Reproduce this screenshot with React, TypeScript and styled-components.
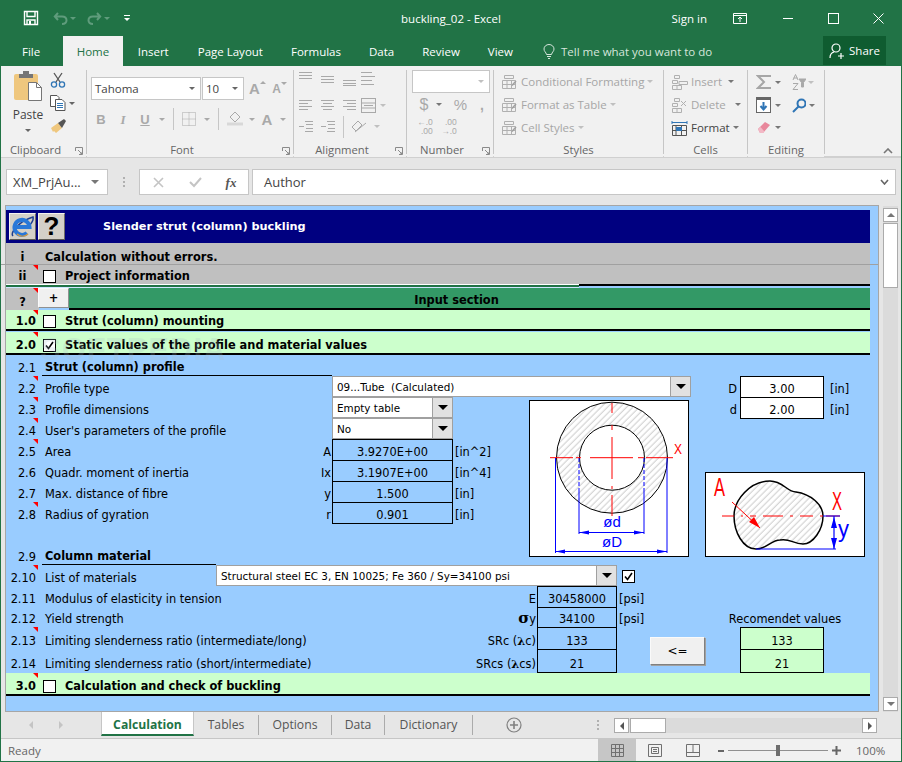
import * as React from "react";
import styled, { createGlobalStyle } from "styled-components";

const GlobalStyle = createGlobalStyle`
  html, body { margin: 0; padding: 0; background: #e6e6e6; }
  * { box-sizing: border-box; }
`;

const UI = `"Open Sans", "Noto Sans", sans-serif`;
const CELL = `"DejaVu Sans", sans-serif`;

const App_ = styled.div`
  width: 902px;
  height: 762px;
  display: flex;
  flex-direction: column;
  border: 1px solid #217346;
  border-top: 0;
  font-family: ${UI};
  font-size: 11.5px;
  color: #444;
  overflow: hidden;
`;

/* ---------- title bar ---------- */
const TitleBar = styled.div`
  height: 36px;
  background: #217346;
  color: #fff;
  display: grid;
  grid-template-columns: 1fr auto 1fr;
  align-items: center;
`;
const Qat = styled.div`
  display: flex;
  align-items: center;
  padding-left: 21px;
`;
const Slot = styled.span<{ $w: number; $h?: number }>`
  width: ${(p) => p.$w}px;
  ${(p) => (p.$h ? `height: ${p.$h}px;` : "")}
  flex: none;
  display: flex;
  align-items: center;
  justify-content: center;
`;
const WinControls = styled.div`
  display: flex;
  align-items: center;
  justify-content: flex-end;
  padding-right: 17px;
`;
const SignIn = styled.span`
  margin-right: 25px;
`;
const Caret = styled.i<{ $c?: string; $s?: number }>`
  display: block;
  flex: none;
  width: 0;
  height: 0;
  border-left: ${(p) => p.$s ?? 3}px solid transparent;
  border-right: ${(p) => p.$s ?? 3}px solid transparent;
  border-top: ${(p) => p.$s ?? 3}px solid ${(p) => p.$c ?? "#8a8a8a"};
`;

/* ---------- ribbon tabs ---------- */
const TabRow = styled.div`
  height: 30px;
  background: #217346;
  display: flex;
  align-items: stretch;
  padding-left: 7px;
  color: #fff;
`;
const RibbonTab = styled.div<{ $active?: boolean; $px?: number }>`
  display: flex;
  align-items: center;
  padding: 0 ${(p) => p.$px ?? 14}px;
  background: ${(p) => (p.$active ? "#f1f1f1" : "transparent")};
  color: ${(p) => (p.$active ? "#217346" : "#fff")};
`;
const TellMe = styled.div`
  display: flex;
  align-items: center;
  gap: 6px;
  margin-left: 16px;
  color: #d6e6dc;
  flex: 1;
`;
const Share = styled.div`
  width: 63px;
  margin-right: 15px;
  background: #0f5c30;
  display: flex;
  align-items: center;
  justify-content: center;
  gap: 4px;
  margin-bottom: 1px;
`;

/* ---------- ribbon ---------- */
const Ribbon = styled.div`
  height: 92px;
  background: #f1f1f1;
  border-bottom: 2px solid #d0d0d0;
  display: flex;
  position: relative;
`;
const Group = styled.div<{ $w: number }>`
  width: ${(p) => p.$w}px;
  flex: none;
  margin: 4px 0 2px;
  border-right: 1px solid #c6c6c6;
  display: flex;
  flex-direction: column;
`;
const GroupBody = styled.div`
  flex: 1;
  display: flex;
  min-height: 0;
`;
const GroupLabel = styled.div<{ $launch?: boolean }>`
  height: 14px;
  margin-bottom: -3px;
  line-height: 14px;
  font-size: 11.3px;
  text-align: center;
  color: #666;
  position: relative;
  padding-right: ${(p) => (p.$launch ? 16 : 0)}px;
  background: #f1f1f1;
`;
const Launcher = styled.svg`
  position: absolute;
  right: 3px;
  top: 4px;
`;
const PasteCol = styled.div`
  width: 44px;
  padding-left: 10px;
  display: flex;
  flex-direction: column;
  align-items: center;
  color: #444;
`;
const PasteLabel = styled.div`
  margin-top: 6px;
  line-height: 16px;
  font-size: 12px;
`;
const PasteCaret = styled.div`
  margin-top: 6px;
`;
const ClipCol = styled.div`
  display: flex;
  flex-direction: column;
  gap: 7px;
  padding: 2px 0 0 5px;
`;
const ToolStack = styled.div<{ $pl?: number; $pt?: number }>`
  display: flex;
  flex-direction: column;
  padding: ${(p) => p.$pt ?? 0}px 0 0 ${(p) => p.$pl ?? 0}px;
`;
const ToolRow = styled.div<{ $h?: number; $pl?: number }>`
  display: flex;
  align-items: center;
  height: ${(p) => p.$h ?? 23}px;
  padding-left: ${(p) => p.$pl ?? 0}px;
`;
const Combo = styled.div<{ $w: number }>`
  width: ${(p) => p.$w}px;
  height: 23px;
  background: #fff;
  border: 1px solid #c6c6c6;
  display: flex;
  align-items: center;
  justify-content: space-between;
  padding: 0 5px 0 3px;
  color: #444;
  margin-right: 1px;
`;
const Sep = styled.span`
  width: 1px;
  height: 22px;
  background: #c6c6c6;
  flex: none;
`;
const Glyph = styled.span<{ $c?: string; $serif?: boolean; $i?: boolean; $u?: boolean; $size?: number; $thin?: boolean }>`
  font-family: ${(p) => (p.$serif ? `"Liberation Serif", serif` : `"Liberation Sans", sans-serif`)};
  font-weight: ${(p) => (p.$thin ? "normal" : "bold")};
  font-style: ${(p) => (p.$i ? "italic" : "normal")};
  text-decoration: ${(p) => (p.$u ? "underline" : "none")};
  font-size: ${(p) => p.$size ?? 13}px;
  color: ${(p) => p.$c ?? "#a9a9a9"};
  line-height: 1;
`;
const StyleItem = styled.div<{ $on?: boolean }>`
  display: flex;
  align-items: center;
  height: 23px;
  gap: 3px;
  color: ${(p) => (p.$on ? "#444" : "#a6a6a6")};
  white-space: nowrap;
`;
const Collapse = styled.svg`
  position: absolute;
  right: 8px;
  bottom: 2px;
`;
const MiniNum = styled.span`
  font-family: "Liberation Sans", sans-serif;
  font-size: 8.5px;
  line-height: 9px;
  color: #a9a9a9;
  text-align: right;
  display: block;
`;

/* ---------- formula bar ---------- */
const FormulaBar = styled.div`
  height: 47px;
  background: #e6e6e6;
  display: flex;
  align-items: flex-start;
  padding: 11px 5px 0 5px;
`;
const NameBox = styled.div`
  width: 102px;
  height: 26px;
  background: #fff;
  border: 1px solid #c6c6c6;
  display: flex;
  align-items: center;
  justify-content: space-between;
  padding: 0 8px 0 6px;
  font-size: 13px;
  color: #444;
`;
const Grip = styled.div`
  width: 31px;
  height: 26px;
  flex: none;
  display: flex;
  flex-direction: column;
  align-items: center;
  justify-content: center;
  gap: 2px;
  & > i { width: 2px; height: 2px; background: #b0b0b0; display: block; }
`;
const FxButtons = styled.div`
  width: 110px;
  height: 26px;
  background: #fff;
  border: 1px solid #c6c6c6;
  display: flex;
  align-items: center;
  margin-right: 3px;
`;
const FormulaInput = styled.div`
  flex: 1;
  height: 26px;
  background: #fff;
  border: 1px solid #c6c6c6;
  display: flex;
  align-items: center;
  justify-content: space-between;
  padding: 0 6px 0 11px;
  font-size: 13px;
  color: #444;
`;

/* ---------- sheet ---------- */
const MainRow = styled.div`
  height: 507px;
  display: flex;
  background: #e6e6e6;
  padding-left: 4px;
`;
const Frame = styled.div`
  width: 874px;
  height: 507px;
  border: 1px solid #a6a6a6;
  background: #99ccff;
  position: relative;
  &::before {
    content: "";
    position: absolute;
    left: -5px;
    right: 0;
    top: 58px;
    height: 1px;
    background: #a0a0a0;
    z-index: 3;
  }
`;
const Watermark = styled.div`
  position: absolute;
  left: 34px;
  top: 126px;
  font: bold 31px "Liberation Sans", sans-serif;
  letter-spacing: 1px;
  color: rgba(170, 190, 200, 0.22);
  z-index: 4;
  pointer-events: none;
`;
const SheetGrid = styled.div`
  padding-top: 4px;
  display: grid;
  font-family: ${CELL};
  font-size: 11.4px;
  color: #000;
  grid-template-columns:
    [x6] 33px [x39] 30px [x69] 147px [x216] 116px [x332] 121px [x453] 76px [x529]
    8px [x537] 42px [x579] 38px [x617] 33px [x650] 39px [x689] 2px [x691] 14px [x705] 35px [x740]
    84px [x824] 41px [x865] 5px [x870];
  grid-template-rows:
    33px 22px 19px 4px 22px 21px 24px 21px 21px 21px 21px 21px 21px 21px 21px 21px 21px
    21px 21px 20px 22px 23px 24px;
`;
type Place = { $row: number; $span?: number; $from?: number; $to?: number };
const place = (p: Place) => `
  grid-row: ${p.$row} / span ${p.$span ?? 1};
  grid-column: x${p.$from ?? 6} / x${p.$to ?? 870};
`;
const TitleCell = styled.div<Place>`
  ${place}
  background: #000080;
  color: #fff;
  display: flex;
  align-items: center;
  padding-left: 3px;
  font-weight: bold;
  font-size: 11.3px;
`;
const BevelBtn = styled.div`
  width: 27px;
  height: 27px;
  margin-right: 2px;
  background: #d4d0c8;
  border: 1px solid;
  border-color: #f4f2ee #6f6d68 #5a5853 #f4f2ee;
  display: flex;
  align-items: center;
  justify-content: center;
  color: #000;
  font: bold 26px "Liberation Sans", sans-serif;
`;
const TitleText = styled.span`
  margin-left: 36px;
`;
const Band = styled.div<Place & { $tone: "gray" | "mint" | "green"; $rule?: boolean; $mt?: number; $pt?: number }>`
  ${place}
  --pt: ${(p) => p.$pt ?? 0}px;
  margin-top: ${(p) => p.$mt ?? 0}px;
  padding-top: var(--pt);
  background: ${(p) => ({ gray: "#c0c0c0", mint: "#ccffcc", green: "#339966" })[p.$tone]};
  ${(p) => (p.$rule ? "border-bottom: 2px solid #000;" : "")}
  display: flex;
  align-items: center;
  font-weight: bold;
  position: relative;
`;
const Num = styled.div<{ $note?: boolean; $center?: boolean; $bold?: boolean }>`
  width: 33px;
  flex: none;
  align-self: stretch;
  display: flex;
  align-items: center;
  justify-content: ${(p) => (p.$center ? "center" : "flex-end")};
  padding-right: ${(p) => (p.$center ? 0 : 3)}px;
  font-weight: ${(p) => (p.$bold ? "bold" : "normal")};
  position: relative;
  ${(p) =>
    p.$note
      ? `&::after {
    content: "";
    position: absolute;
    top: calc(-1 * var(--pt, 0px));
    right: 1px;
    border-top: 5px solid #ff0000;
    border-left: 5px solid transparent;
  }`
      : ""}
`;
const RowNum = styled(Num)<{ $row: number }>`
  grid-row: ${(p) => p.$row};
  grid-column: x6 / x39;
  width: auto;
  align-items: flex-end;
  line-height: 16px;
`;
const Check = styled.span`
  width: 13px;
  height: 13px;
  flex: none;
  background: #fff;
  border: 1px solid #000;
  margin: 0 9px 0 4px;
  display: flex;
  align-items: center;
  justify-content: center;
`;
const PlainCheck = styled(Check)<Place>`
  ${place}
  margin: 5px 0 0 5px;
`;
const Label = styled.div<Place & { $head?: boolean; $rule?: boolean }>`
  ${place}
  line-height: 16px;
  align-self: end;
  white-space: nowrap;
  margin-left: 3px;
  padding-left: 3px;
  font-weight: ${(p) => (p.$head ? "bold" : "normal")};
  ${(p) => (p.$rule ? "border-bottom: 1px solid #000;" : "")}
`;
const Sym = styled.div<Place>`
  ${place}
  line-height: 16px;
  align-self: end;
  text-align: right;
  padding-right: 1px;
  white-space: nowrap;
  & b { font-family: "DejaVu Serif", serif; }
`;
const BigSigma = styled.b`
  font-size: 15px;
  line-height: 0;
`;
const Unit = styled.div<Place & { $pl?: number; $center?: boolean; $right?: boolean }>`
  ${place}
  line-height: 16px;
  align-self: end;
  padding-left: ${(p) => p.$pl ?? 2}px;
  white-space: nowrap;
  ${(p) => (p.$center ? "text-align: center;" : "")}
  ${(p) => (p.$right ? "text-align: right; padding-right: 3px;" : "")}
`;
const Value = styled.div<Place & { $tone?: "blue" | "white" | "mint" }>`
  ${place}
  border: 1px solid #000;
  margin-bottom: -1px;
  background: ${(p) => ({ blue: "transparent", white: "#fff", mint: "#ccffcc" })[p.$tone ?? "blue"]};
  display: flex;
  align-items: flex-end;
  justify-content: center;
  line-height: 16px;
`;
const Drop = styled.div<Place>`
  ${place}
  background: #fff;
  border: 1px solid #a0a0a0;
  display: flex;
  align-items: center;
  justify-content: space-between;
  padding-left: 4px;
  font-size: 10.4px;
  white-space: pre;
  overflow: hidden;
`;
const DropBtn = styled.span`
  width: 20px;
  align-self: stretch;
  background: #e1e1e1;
  border-left: 1px solid #a0a0a0;
  display: flex;
  align-items: center;
  justify-content: center;
`;
const Picture = styled.div<Place & { $mt: number; $mb: number }>`
  ${place}
  margin: ${(p) => p.$mt}px 0 ${(p) => p.$mb}px;
  background: #fff;
  border: 1px solid #000;
  & > svg { display: block; }
`;
const GoButton = styled.div<Place>`
  ${place}
  margin: 10px 0 7px;
  background: #f0f0f0;
  border: 1px solid;
  border-color: #fafafa #808080 #808080 #fafafa;
  box-shadow: 1px 1px 0 #a0a0a0;
  display: flex;
  align-items: center;
  justify-content: center;
  font-size: 12px;
`;
const PlusBtn = styled.div<Place>`
  ${place}
  margin: 0 0 2px -1px;
  background: #f0f0f0;
  border: 1px solid;
  border-color: #fafafa #909090 #909090 #fafafa;
  display: flex;
  align-items: center;
  justify-content: center;
  font-weight: bold;
  z-index: 1;
`;
const RuleLeft = styled.div<Place>`
  ${place}
  background: #217346;
  border-top: 1px solid #fff;
  border-bottom: 1px solid #cfe6ff;
`;
const RuleRight = styled.div<Place>`
  ${place}
  height: 2px;
  background: #000;
`;
const BandTitle = styled.span<{ $center?: boolean; $ml?: number }>`
  ${(p) => (p.$center ? "flex: 1; text-align: center;" : "")}
  margin-left: ${(p) => p.$ml ?? 0}px;
  white-space: nowrap;
`;

/* ---------- scroll bars ---------- */
const VScroll = styled.div`
  width: 22px;
  padding: 1px 3px 0 4px;
  display: flex;
`;
const VTrack = styled.div`
  flex: 1;
  background: #dbdbdb;
  display: flex;
  flex-direction: column;
  padding-top: 2px;
  padding-bottom: 1px;
`;
const VBtn = styled.div`
  height: 14px;
  background: #fff;
  border: 1px solid #ababab;
  display: flex;
  align-items: center;
  justify-content: center;
`;
const VThumb = styled.div`
  height: 65px;
  margin-top: 1px;
  background: #fff;
  border: 1px solid #ababab;
`;
const Spring = styled.div`
  flex: 1;
`;

/* ---------- sheet tabs ---------- */
const TabBar = styled.div`
  height: 26px;
  background: #e6e6e6;
  display: flex;
  align-items: stretch;
`;
const TabNav = styled.div`
  width: 100px;
  display: flex;
  align-items: center;
  padding-left: 26px;
  gap: 22px;
`;
const SheetTab = styled.div<{ $active?: boolean; $w: number }>`
  width: ${(p) => p.$w}px;
  height: 25px;
  display: flex;
  align-items: center;
  justify-content: center;
  font-size: 12.2px;
  ${(p) =>
    p.$active
      ? `background: #fff; color: #217346; font-weight: bold; border-bottom: 2px solid #217346; border-left: 1px solid #c6c6c6; border-right: 1px solid #c6c6c6; margin-top: -1px; padding-top: 3px;`
      : `color: #555;`}
`;
const TabDiv = styled.span`
  width: 1px;
  height: 20px;
  background: #ababab;
  align-self: center;
`;
const GripSlot = styled(Slot)`
  padding-left: 26px;
`;
const HScroll = styled.div`
  width: 263px;
  height: 15px;
  margin: 6px 0 0 0;
  background: #dbdbdb;
  display: flex;
  align-self: flex-start;
`;
const HBtn = styled.div`
  width: 15px;
  background: #fff;
  border: 1px solid #ababab;
  display: flex;
  align-items: center;
  justify-content: center;
`;
const HThumb = styled.div`
  width: 36px;
  margin-left: 1px;
  background: #fff;
  border: 1px solid #ababab;
`;

/* ---------- status bar ---------- */
const StatusBar = styled.div`
  height: 23px;
  background: #f1f1f1;
  border-top: 1px solid #c6c6c6;
  display: flex;
  align-items: stretch;
  font-size: 11.5px;
  color: #666;
`;
const Ready = styled.div`
  width: 597px;
  padding-left: 7px;
  display: flex;
  align-items: center;
`;
const ViewBtn = styled.div<{ $on?: boolean }>`
  width: 38px;
  background: ${(p) => (p.$on ? "#c6c6c6" : "transparent")};
  display: flex;
  align-items: center;
  justify-content: center;
`;
const ZoomWrap = styled.div`
  display: flex;
  align-items: center;
  padding-left: 6px;
  flex: 1;
`;
const Slider = styled.div`
  width: 100px;
  height: 1px;
  margin: 0 4px;
  background: #909090;
  position: relative;
`;
const SliderThumb = styled.span`
  position: absolute;
  left: 48px;
  top: -5px;
  width: 4px;
  height: 11px;
  background: #6e6e6e;
`;
const ZoomPct = styled.span`
  margin-left: 15px;
`;

const D = "#a9a9a9";
const Lines = ({ rows, w = 14, stroke = D }: { rows: [number, number, number][]; w?: number; stroke?: string }) => (
  <svg width={w} height={14} fill="none" stroke={stroke}>
    {rows.map(([x1, x2, y], i) => (
      <line key={i} x1={x1} x2={x2} y1={y + 0.5} y2={y + 0.5} />
    ))}
  </svg>
);
const Tick = () => (
  <svg width="11" height="11" fill="none" stroke="#000" strokeWidth="1.6">
    <path d="M2 5.5 L4.5 8.5 L9 2" />
  </svg>
);
const LauncherIcon = () => (
  <Launcher width="8" height="8" fill="none" stroke="#8a8a8a">
    <path d="M.5 4V.5H7.5V7.5H4M3 3L7 7M5 7H7V5" />
  </Launcher>
);
const GridIcon = () => (
  <svg width="17" height="16" fill="none" stroke="#b0b0b0" style={{ flex: "none" }}>
    <path d="M3.5 1.5H12.5V4.5H3.5ZM1.5 6.5H14.5V14.5H1.5ZM6 6.5V14.5M10.5 6.5V14.5M1.5 10.5H14.5" />
    <path d="M11 11.5L15 7" stroke="#a0a0a0" strokeWidth="1.500" />
  </svg>
);

export default function App(): React.ReactElement {
  return (
    <App_>
      <GlobalStyle />
      <TitleBar>
        <Qat>
          <Slot $w={18}>
            <svg width="16" height="16" fill="none" stroke="#fff" strokeWidth="1.4">
              <path d="M1.5 1.5H14.5V14.5H1.5Z" />
              <path d="M4 1.5V6.5H12V1.5M4 14.5V10H12V14.5" />
              <rect x="6" y="11" width="2" height="3" fill="#fff" stroke="none" />
            </svg>
          </Slot>
          <Slot $w={12} />
          <Slot $w={16}>
            <svg width="15" height="14" fill="none" stroke="#5f9c7c" strokeWidth="2">
              <path d="M5 2L1.8 5.5L5 9M2 5.5H9C15 5.5 15 13 9 13" />
            </svg>
          </Slot>
          <Slot $w={10}>
            <Caret $c="#5f9c7c" />
          </Slot>
          <Slot $w={8} />
          <Slot $w={16}>
            <svg width="15" height="14" fill="none" stroke="#5f9c7c" strokeWidth="2">
              <path d="M10 2L13.2 5.5L10 9M13 5.5H6C0 5.5 0 13 6 13" />
            </svg>
          </Slot>
          <Slot $w={10}>
            <Caret $c="#5f9c7c" />
          </Slot>
          <Slot $w={10} />
          <Slot $w={10}>
            <svg width="7" height="7" fill="#fff">
              <rect x="0" y="0" width="6" height="1" />
              <path d="M0 3H6L3 6Z" />
            </svg>
          </Slot>
        </Qat>
        <span>buckling_02 - Excel</span>
        <WinControls>
          <SignIn>Sign in</SignIn>
          <Slot $w={16}>
            <svg width="14" height="11" fill="none" stroke="#fff">
              <path d="M.5 .5H13.5V10.5H.5ZM.5 2.5H13.5M7 9V4M5 6L7 4L9 6" />
            </svg>
          </Slot>
          <Slot $w={33} />
          <Slot $w={14}>
            <svg width="11" height="3" fill="#fff">
              <rect y="1" width="10" height="1" />
            </svg>
          </Slot>
          <Slot $w={32} />
          <Slot $w={12}>
            <svg width="11" height="11" fill="none" stroke="#fff">
              <rect x=".5" y=".5" width="10" height="10" />
            </svg>
          </Slot>
          <Slot $w={33} />
          <Slot $w={12}>
            <svg width="11" height="11" fill="none" stroke="#fff">
              <path d="M.5 .5L10.5 10.5M10.5 .5L.5 10.5" />
            </svg>
          </Slot>
        </WinControls>
      </TitleBar>

      <TabRow>
        <RibbonTab $px={14}>File</RibbonTab>
        <Slot $w={9} />
        <RibbonTab $active $px={13.5}>Home</RibbonTab>
        <RibbonTab $px={15}>Insert</RibbonTab>
        <RibbonTab>Page Layout</RibbonTab>
        <RibbonTab>Formulas</RibbonTab>
        <RibbonTab>Data</RibbonTab>
        <RibbonTab>Review</RibbonTab>
        <RibbonTab>View</RibbonTab>
        <TellMe>
          <svg width="12" height="15" fill="none" stroke="#d6e6dc">
            <path d="M3.5 10.5C3 8 1 7.5 1 5A5 4.5 0 0 1 11 5C11 7.5 9 8 8.500 10.5ZM4 12.500H8M5 14.500H7" />
          </svg>
          <span>Tell me what you want to do</span>
        </TellMe>
        <Share>
          <svg width="16" height="16" fill="none" stroke="#fff" strokeWidth="1.2">
            <circle cx="7" cy="5" r="4" />
            <path d="M1 15C1 11 3 9.500 5 9M12 10V16M9 13H15" />
          </svg>
          <span>Share</span>
        </Share>
      </TabRow>

      <Ribbon>
        <Group $w={86}>
          <GroupBody>
            <PasteCol>
              <svg width="30" height="31" style={{ flex: "none" }}>
                <rect x="1" y="4" width="24" height="26" rx="2" fill="#efc77e" />
                <path d="M6 8V4H10V1H16V4H20V8Z" fill="#767676" />
                <path d="M15.500 12.500H23.500L28.500 17.500V30.500H15.500Z" fill="#fff" stroke="#767676" />
                <path d="M23.500 12.500V17.500H28.500" fill="none" stroke="#767676" />
              </svg>
              <PasteLabel>Paste</PasteLabel>
              <PasteCaret>
                <Caret $c="#666" />
              </PasteCaret>
            </PasteCol>
            <ClipCol>
              <svg width="16" height="16" fill="none" strokeWidth="1.300">
                <path d="M4 1L10 10M12 1L6 10" stroke="#555" />
                <circle cx="4" cy="12.500" r="2.600" stroke="#2f75b5" />
                <circle cx="12" cy="12.500" r="2.600" stroke="#2f75b5" />
              </svg>
              <Slot $w={28} $h={16}>
                <svg width="16" height="16" fill="#fff" stroke="#555">
                  <path d="M.5 .5H7L9 2.500V11.500H.5Z" />
                  <path d="M5.500 4.500H12L15 7.500V15.500H5.500Z" />
                  <path d="M7 8.500H13M7 10.500H13M7 12.500H13" stroke="#2f75b5" />
                </svg>
                <Slot $w={12}>
                  <Caret $c="#666" />
                </Slot>
              </Slot>
              <svg width="17" height="16">
                <path d="M1 10L8 5L12 10L6 15L4 13L3 14Z" fill="#efc77e" />
                <path d="M8 5L14 1L16 3L12 10Z" fill="#555" />
              </svg>
            </ClipCol>
          </GroupBody>
          <GroupLabel $launch>
            Clipboard
            <LauncherIcon />
          </GroupLabel>
        </Group>

        <Group $w={207}>
          <GroupBody>
            <ToolStack $pl={4} $pt={7}>
              <ToolRow>
                <Combo $w={110}>
                  Tahoma
                  <Caret $c="#666" />
                </Combo>
                <Combo $w={42}>
                  10
                  <Caret $c="#666" />
                </Combo>
                <Slot $w={5} />
                <Slot $w={15}>
                  <Glyph $size={15}>A</Glyph>
                  <Caret $c={D} style={{ transform: "rotate(180deg) translateY(6px)" }} />
                </Slot>
                <Slot $w={7} />
                <Slot $w={15}>
                  <Glyph $size={12}>A</Glyph>
                  <Caret $c={D} style={{ transform: "translateY(-5px)" }} />
                </Slot>
              </ToolRow>
              <ToolRow $h={8} />
              <ToolRow $h={22}>
                <Slot $w={20}><Glyph>B</Glyph></Slot>
                <Slot $w={24}><Glyph $serif $i>I</Glyph></Slot>
                <Slot $w={20}><Glyph $u>U</Glyph></Slot>
                <Slot $w={14}><Caret $c={D} /></Slot>
                <Slot $w={9}><Sep /></Slot>
                <Slot $w={22}>
                  <svg width="14" height="14" fill="none" stroke={D} strokeDasharray="1 1">
                    <rect x=".5" y=".5" width="13" height="13" />
                    <path d="M7 .5V13.500M.5 7H13.500" />
                  </svg>
                </Slot>
                <Slot $w={13}><Caret $c={D} /></Slot>
                <Slot $w={11}><Sep /></Slot>
                <Slot $w={22}>
                  <svg width="16" height="16" fill="none" stroke={D}>
                    <path d="M3 6L8 1L13 6L8 11Z" />
                    <path d="M0 13H16" strokeWidth="3" stroke="#d8d8d8" />
                  </svg>
                </Slot>
                <Slot $w={12}><Caret $c={D} /></Slot>
                <Slot $w={18}><Glyph $size={15}>A</Glyph></Slot>
                <Slot $w={14}><Caret $c={D} /></Slot>
              </ToolRow>
            </ToolStack>
          </GroupBody>
          <GroupLabel $launch>
            Font
            <LauncherIcon />
          </GroupLabel>
        </Group>

        <Group $w={113}>
          <GroupBody>
            <ToolStack $pl={1}>
              <ToolRow $h={18}>
                <Slot $w={22}><Lines rows={[[0, 13, 0], [0, 13, 3], [0, 13, 6]]} /></Slot>
                <Slot $w={22}><Lines rows={[[0, 13, 4], [0, 13, 7], [0, 13, 10]]} /></Slot>
                <Slot $w={22}><Lines rows={[[0, 13, 8], [0, 13, 11], [0, 13, 13]]} /></Slot>
                <Slot $w={16}><Lines w={16} rows={[[0, 11, 0], [0, 14, 4], [0, 11, 8], [0, 13, 12]]} /></Slot>
              </ToolRow>
              <ToolRow $h={6} />
              <ToolRow $h={23}>
                <Slot $w={22}><Lines rows={[[0, 13, 1], [0, 9, 4], [0, 13, 7], [0, 9, 10]]} /></Slot>
                <Slot $w={22}><Lines rows={[[0, 13, 1], [2, 11, 4], [0, 13, 7], [2, 11, 10]]} /></Slot>
                <Slot $w={22}><Lines rows={[[0, 13, 1], [4, 13, 4], [0, 13, 7], [4, 13, 10]]} /></Slot>
                <Slot $w={16}>
                  <svg width="16" height="15" fill="none" stroke={D}>
                    <rect x=".5" y=".5" width="14" height="14" />
                    <path d="M.5 5H14.500M.5 10H14.500M3 7.500H12" />
                  </svg>
                </Slot>
                <Slot $w={12}><Caret $c="#c0c0c0" /></Slot>
              </ToolRow>
              <ToolRow $h={19}>
                <Slot $w={22}><Lines rows={[[6, 14, 1], [7, 14, 4], [0, 5, 6], [7, 14, 8], [6, 14, 11]]} /></Slot>
                <Slot $w={22}><Lines rows={[[6, 14, 1], [7, 14, 4], [0, 5, 6], [7, 14, 8], [6, 14, 11]]} /></Slot>
                <Slot $w={8}><Sep /></Slot>
                <Slot $w={24}>
                  <svg width="16" height="15" fill="none" stroke={D}>
                    <path d="M1 8L7 2L11 6L5 12ZM4 13L15 4" />
                  </svg>
                </Slot>
                <Slot $w={12}><Caret $c="#c0c0c0" /></Slot>
              </ToolRow>
            </ToolStack>
          </GroupBody>
          <GroupLabel $launch>
            Alignment
            <LauncherIcon />
          </GroupLabel>
        </Group>

        <Group $w={87}>
          <GroupBody>
            <ToolStack $pl={5}>
              <ToolRow $h={23}>
                <Combo $w={78}>
                  <span />
                  <Caret $c="#c0c0c0" />
                </Combo>
              </ToolRow>
              <ToolRow $h={23} $pl={4}>
                <Slot $w={16}><Glyph $thin $size={16}>$</Glyph></Slot>
                <Slot $w={14}><Caret $c="#777" /></Slot>
                <Slot $w={7} />
                <Slot $w={15}><Glyph $thin $size={15}>%</Glyph></Slot>
                <Slot $w={8} />
                <Slot $w={12}><Glyph $size={14}>,</Glyph></Slot>
              </ToolRow>
              <ToolRow $h={22} $pl={3}>
                <Slot $w={20}><div><MiniNum>←.0</MiniNum><MiniNum>.00</MiniNum></div></Slot>
                <Slot $w={4} />
                <Slot $w={20}><div><MiniNum>.00</MiniNum><MiniNum>→.0</MiniNum></div></Slot>
              </ToolRow>
            </ToolStack>
          </GroupBody>
          <GroupLabel $launch>
            Number
            <LauncherIcon />
          </GroupLabel>
        </Group>

        <Group $w={170}>
          <GroupBody>
            <ToolStack $pl={7}>
              <StyleItem>
                <GridIcon />
                Conditional Formatting
                <Caret $c="#c0c0c0" />
              </StyleItem>
              <StyleItem>
                <GridIcon />
                Format as Table
                <Caret $c="#c0c0c0" />
              </StyleItem>
              <StyleItem>
                <GridIcon />
                Cell Styles
                <Caret $c="#c0c0c0" />
              </StyleItem>
            </ToolStack>
          </GroupBody>
          <GroupLabel>Styles</GroupLabel>
        </Group>

        <Group $w={84}>
          <GroupBody>
            <ToolStack $pl={7}>
              <StyleItem>
                <svg width="17" height="16" fill="none" stroke="#b0b0b0">
                  <path d="M3.500 1.500H8.500V4.500H3.500ZM1.500 11.500H10.500V15.500H1.500ZM6 11.500V15.500M8 7.500H16.500V10.500H8ZM1.500 6.500H6.500V9.500H1.500Z" />
                </svg>
                Insert
                <Slot $w={12}><Caret $c="#777" /></Slot>
              </StyleItem>
              <StyleItem>
                <svg width="17" height="16" fill="none" stroke="#b0b0b0">
                  <path d="M3.500 1.500H8.500V4.500H3.500ZM1.500 11.500H10.500V15.500H1.500ZM6 11.500V15.500M1.500 6.500H6.500V9.500H1.500ZM10 4L15 9M15 4L10 9" />
                </svg>
                Delete
                <Slot $w={18}><Caret $c="#777" /></Slot>
              </StyleItem>
              <StyleItem $on>
                <svg width="17" height="16" fill="none" stroke="#555">
                  <path d="M1.500 5.500H15.500V15.500H1.500ZM1.500 10.500H15.500M5 5.500V15.500M10.500 5.500V15.500" />
                  <path d="M1 2.500H16M1 1V4M16 1V4" stroke="#2f75b5" />
                  <rect x="5" y="7" width="6" height="4" fill="#2f75b5" stroke="none" />
                </svg>
                Format
                <Caret $c="#777" />
              </StyleItem>
            </ToolStack>
          </GroupBody>
          <GroupLabel>Cells</GroupLabel>
        </Group>

        <Group $w={77}>
          <GroupBody>
            <ToolStack $pl={7}>
              <ToolRow $h={24}>
                <Slot $w={17}>
                  <svg width="16" height="16" fill="none" stroke="#a6a6a6" strokeWidth="2">
                    <path d="M15 2H2L8 8L2 14H15" />
                  </svg>
                </Slot>
                <Slot $w={11}><Caret $c="#777" /></Slot>
                <Slot $w={9} />
                <Slot $w={14}>
                  <svg width="14" height="16" fill="none" stroke="#a9a9a9">
                    <path d="M1 6L3.500 .5L6 6M1.500 4H5.500M1 9.500H6L1 15.500H6" />
                    <path d="M7 5H14L11.500 8.500V13H9.500V8.500Z" fill="#a9a9a9" />
                  </svg>
                </Slot>
                <Slot $w={10}><Caret $c="#c0c0c0" /></Slot>
              </ToolRow>
              <ToolRow $h={22}>
                <Slot $w={17}>
                  <svg width="15" height="16" fill="#fff">
                    <rect width="15" height="16" fill="#666" />
                    <rect x="1" y="3" width="13" height="12" fill="#fff" />
                    <path d="M7.500 5V12M4.500 9L7.500 12.500L10.500 9" fill="none" stroke="#2f75b5" strokeWidth="2" />
                  </svg>
                </Slot>
                <Slot $w={11}><Caret $c="#777" /></Slot>
                <Slot $w={9} />
                <Slot $w={14}>
                  <svg width="15" height="15" fill="none" stroke="#2f75b5" strokeWidth="2">
                    <circle cx="9.500" cy="5.500" r="4" />
                    <path d="M6.500 8.500L1 14" />
                  </svg>
                </Slot>
                <Slot $w={12}><Caret $c="#777" /></Slot>
              </ToolRow>
              <ToolRow $h={23}>
                <Slot $w={17}>
                  <svg width="14" height="13">
                    <path d="M1 8L8 1L13 4L6 12H3Z" fill="#e8879b" />
                    <path d="M1 8L3 12H6L7.500 10.500L3.500 6Z" fill="#f2b8c5" />
                  </svg>
                </Slot>
                <Slot $w={11}><Caret $c="#777" /></Slot>
              </ToolRow>
            </ToolStack>
          </GroupBody>
          <GroupLabel>Editing</GroupLabel>
        </Group>
        <Collapse width="10" height="6" fill="none" stroke="#777" strokeWidth="1.600">
          <path d="M1 5L5 1L9 5" />
        </Collapse>
      </Ribbon>

      <FormulaBar>
        <NameBox>
          XM_PrjAu...
          <Caret $c="#777" $s={4} />
        </NameBox>
        <Grip><i /><i /><i /></Grip>
        <FxButtons>
          <Slot $w={37}>
            <svg width="11" height="11" fill="none" stroke="#c4c4c4" strokeWidth="1.600">
              <path d="M1 1L10 10M10 1L1 10" />
            </svg>
          </Slot>
          <Slot $w={36}>
            <svg width="13" height="11" fill="none" stroke="#c4c4c4" strokeWidth="2">
              <path d="M1 5L5 9L12 1" />
            </svg>
          </Slot>
          <Slot $w={36}>
            <Glyph $serif $i $c="#555" $size={13}>fx</Glyph>
          </Slot>
        </FxButtons>
        <FormulaInput>
          Author
          <svg width="9" height="6" fill="none" stroke="#666" strokeWidth="1.600">
            <path d="M1 1L4.500 5L8 1" />
          </svg>
        </FormulaInput>
      </FormulaBar>

      <MainRow>
        <Frame>
          <Watermark>SOFTPEDIA</Watermark>
          <SheetGrid>
            <TitleCell $row={1}>
              <BevelBtn>
                <svg width="25" height="25">
                  <path d="M3 22C0 19 9 7 23 3C24 7 21 10 19 12" fill="none" stroke="#1f3f8f" strokeWidth="1.500" />
                  <path d="M6 13H19.500A7.500 7.500 0 1 0 17 19" fill="none" stroke="#2a78d8" strokeWidth="4" />
                  <path d="M7 20C10 23 15 23 18 20" fill="none" stroke="#d99a3a" strokeWidth="1.200" />
                </svg>
              </BevelBtn>
              <BevelBtn>?</BevelBtn>
              <TitleText>Slender strut (column) buckling</TitleText>
            </TitleCell>

            <Band $row={2} $tone="gray" $pt={6}>
              <Num $center $bold>i</Num>
              <BandTitle $ml={6}>Calculation without errors.</BandTitle>
            </Band>
            <Band $row={3} $tone="gray" $pt={3}>
              <Num $center $note $bold>ii</Num>
              <Check />
              <BandTitle>Project information</BandTitle>
            </Band>
            <RuleLeft $row={4} $to={579} />
            <RuleRight $row={4} $from={579} $to={870} />

            <Band $row={5} $from={6} $to={39} $tone="gray" $pt={6}>
              <Num $center $note $bold>?</Num>
            </Band>
            <PlusBtn $row={5} $from={39} $to={69}>+</PlusBtn>
            <Band $row={5} $from={69} $tone="green" $rule $pt={4}>
              <BandTitle $center style={{ marginLeft: -26 }}>Input section</BandTitle>
            </Band>

            <Band $row={6} $tone="mint" $rule $pt={3}>
              <Num $bold $note>1.0</Num>
              <Check />
              <BandTitle>Strut (column) mounting</BandTitle>
            </Band>
            <Band $row={7} $tone="mint" $rule $mt={1} $pt={5}>
              <Num $bold $note>2.0</Num>
              <Check><Tick /></Check>
              <BandTitle>Static values of the profile and material values</BandTitle>
            </Band>

            <RowNum $row={8}>2.1</RowNum>
            <Label $row={8} $from={39} $to={332} $head $rule>Strut (column) profile</Label>

            <RowNum $row={9} $note>2.2</RowNum>
            <Label $row={9} $from={39} $to={332}>Profile type</Label>
            <Drop $row={9} $from={332} $to={691}>
              09...Tube  (Calculated)
              <DropBtn><Caret $c="#000" $s={5} /></DropBtn>
            </Drop>
            <Unit $row={9} $from={705} $to={740} $right>D</Unit>
            <Value $row={9} $from={740} $to={824} $tone="white">3.00</Value>
            <Unit $row={9} $from={824} $to={870} $pl={6}>[in]</Unit>

            <RowNum $row={10} $note>2.3</RowNum>
            <Label $row={10} $from={39} $to={332}>Profile dimensions</Label>
            <Drop $row={10} $from={332} $to={453}>
              Empty table
              <DropBtn><Caret $c="#000" $s={5} /></DropBtn>
            </Drop>
            <Unit $row={10} $from={705} $to={740} $right>d</Unit>
            <Value $row={10} $from={740} $to={824} $tone="white">2.00</Value>
            <Unit $row={10} $from={824} $to={870} $pl={6}>[in]</Unit>

            <RowNum $row={11} $note>2.4</RowNum>
            <Label $row={11} $from={39} $to={332}>User's parameters of the profile</Label>
            <Drop $row={11} $from={332} $to={453}>
              No
              <DropBtn><Caret $c="#000" $s={5} /></DropBtn>
            </Drop>

            <RowNum $row={12} $note>2.5</RowNum>
            <Label $row={12} $from={39} $to={216}>Area</Label>
            <Sym $row={12} $from={216} $to={332}>A</Sym>
            <Value $row={12} $from={332} $to={453}>3.9270E+00</Value>
            <Unit $row={12} $from={453} $to={529}>[in^2]</Unit>

            <RowNum $row={13}>2.6</RowNum>
            <Label $row={13} $from={39} $to={216}>Quadr. moment of inertia</Label>
            <Sym $row={13} $from={216} $to={332}>Ix</Sym>
            <Value $row={13} $from={332} $to={453}>3.1907E+00</Value>
            <Unit $row={13} $from={453} $to={529}>[in^4]</Unit>

            <RowNum $row={14}>2.7</RowNum>
            <Label $row={14} $from={39} $to={216}>Max. distance of fibre</Label>
            <Sym $row={14} $from={216} $to={332}>y</Sym>
            <Value $row={14} $from={332} $to={453}>1.500</Value>
            <Unit $row={14} $from={453} $to={529}>[in]</Unit>

            <RowNum $row={15} $note>2.8</RowNum>
            <Label $row={15} $from={39} $to={216}>Radius of gyration</Label>
            <Sym $row={15} $from={216} $to={332}>r</Sym>
            <Value $row={15} $from={332} $to={453}>0.901</Value>
            <Unit $row={15} $from={453} $to={529}>[in]</Unit>

            <Picture $row={10} $span={8} $from={529} $to={689} $mt={3} $mb={8}>
              <svg width="158" height="155" viewBox="1 1 158 155">
                <defs>
                  <pattern id="hatch" width="4.500" height="4.500" patternUnits="userSpaceOnUse" patternTransform="rotate(-45)">
                    <line x1="0" x2="4.500" y1="2" y2="2" stroke="#b4b4b4" strokeWidth="0.700" />
                  </pattern>
                </defs>
                <circle cx="83" cy="57.700" r="55.500" fill="url(#hatch)" stroke="#000" strokeWidth="1" />
                <circle cx="83" cy="57.700" r="32.500" fill="#fff" stroke="#000" strokeWidth="1" />
                <g stroke="#f00" fill="none">
                  <path d="M21 57.700H44M47 57.700H52M61 57.700H104M109 57.700H115M117 57.700H144" />
                  <path d="M83 3V13M83 25V30M83 37V79M83 86V89M83 95V116" />
                </g>
                <g stroke="#00f" fill="none">
                  <path d="M26.500 58V153M138 58V153" />
                  <path d="M50 58V88" strokeDasharray="4 2" />
                  <path d="M115 58V88" strokeDasharray="4 2" />
                  <path d="M50 88V134M115 88V134" />
                  <path d="M50 132.500H115M26.500 151.500H138" />
                </g>
                <g fill="#00f">
                  <path d="M50 132.500L60 130.500V134.500ZM115 132.500L105 130.500V134.500ZM26.500 151.500L36 149.500V153.500ZM138 151.500L128 149.500V153.500Z" />
                  <text x="83" y="127" fontSize="15" textAnchor="middle" fontFamily="Liberation Sans">ød</text>
                  <text x="83" y="146.500" fontSize="15" textAnchor="middle" fontFamily="Liberation Sans">øD</text>
                </g>
                <text x="145" y="54" fill="#f00" fontSize="15" textLength="8" lengthAdjust="spacingAndGlyphs" fontFamily="Liberation Sans">X</text>
              </svg>
            </Picture>
            <Picture $row={13} $span={5} $from={705} $to={865} $mt={12} $mb={8}>
              <svg width="158" height="83" viewBox="1 1 158 83">
                <path d="M29 44C29 28 45 9 65 9C78 9 82 20 91 20C105 22 118 32 118 44C118 58 108 72 98 72C88 72 85 66 75 68C66 68 62 77 51 77C38 77 29 60 29 44Z" fill="url(#hatch)" stroke="#000" strokeWidth="1.500" />
                <g stroke="#f00" fill="none">
                  <path d="M17 44H29M36 44H38M45 44H51M58 44H78M85 44H88M95 44H108M115 44H118M121 44H135" />
                  <path d="M27 30L55 56" />
                </g>
                <path d="M55 56L44 50L49 45Z" fill="#f00" />
                <g stroke="#00f" fill="none" strokeWidth="1.200">
                  <path d="M118 44H135M51 77H131M129 44V77" />
                </g>
                <path d="M129 45L132 56H126ZM129 77L132 66H126Z" fill="#00f" />
                <text x="9" y="24" fontSize="25" fill="#f00" textLength="11" lengthAdjust="spacingAndGlyphs" fontFamily="Liberation Sans">A</text>
                <text x="127" y="38" fontSize="25" fill="#f00" textLength="10" lengthAdjust="spacingAndGlyphs" fontFamily="Liberation Sans">X</text>
                <text x="133" y="65" fontSize="24" fill="#00f" textLength="11" lengthAdjust="spacingAndGlyphs" fontFamily="Liberation Sans">y</text>
              </svg>
            </Picture>

            <RowNum $row={17}>2.9</RowNum>
            <Label $row={17} $from={39} $to={216} $head $rule>Column material</Label>

            <RowNum $row={18} $note>2.10</RowNum>
            <Label $row={18} $from={39} $to={216}>List of materials</Label>
            <Drop $row={18} $from={216} $to={617}>
              Structural steel EC 3, EN 10025; Fe 360 / Sy=34100 psi
              <DropBtn><Caret $c="#000" $s={5} /></DropBtn>
            </Drop>
            <PlainCheck $row={18} $from={617} $to={650}><Tick /></PlainCheck>

            <RowNum $row={19}>2.11</RowNum>
            <Label $row={19} $from={39} $to={453}>Modulus of elasticity in tension</Label>
            <Sym $row={19} $from={453} $to={537}>E</Sym>
            <Value $row={19} $from={537} $to={617}>30458000</Value>
            <Unit $row={19} $from={617} $to={650}>[psi]</Unit>

            <RowNum $row={20}>2.12</RowNum>
            <Label $row={20} $from={39} $to={453}>Yield strength</Label>
            <Sym $row={20} $from={453} $to={537}><BigSigma>σ</BigSigma>y</Sym>
            <Value $row={20} $from={537} $to={617}>34100</Value>
            <Unit $row={20} $from={617} $to={650}>[psi]</Unit>
            <Unit $row={20} $from={705} $to={865} $pl={0} $center>Recomendet values</Unit>

            <RowNum $row={21} $note>2.13</RowNum>
            <Label $row={21} $from={39} $to={453}>Limiting slenderness ratio (intermediate/long)</Label>
            <Sym $row={21} $from={453} $to={537}>SRc (<b>λ</b>c)</Sym>
            <Value $row={21} $from={537} $to={617}>133</Value>
            <Value $row={21} $from={740} $to={824} $tone="mint">133</Value>

            <GoButton $row={21} $span={2} $from={650} $to={705}>{"<="}</GoButton>

            <RowNum $row={22}>2.14</RowNum>
            <Label $row={22} $from={39} $to={453}>Limiting slenderness ratio (short/intermediate)</Label>
            <Sym $row={22} $from={453} $to={537}>SRcs (<b>λ</b>cs)</Sym>
            <Value $row={22} $from={537} $to={617}>21</Value>
            <Value $row={22} $from={740} $to={824} $tone="mint">21</Value>

            <Band $row={23} $tone="mint" $rule $mt={1} $pt={5}>
              <Num $bold $note>3.0</Num>
              <Check />
              <BandTitle>Calculation and check of buckling</BandTitle>
            </Band>
          </SheetGrid>
        </Frame>
        <VScroll>
          <VTrack>
            <VBtn><Caret $c="#777" $s={4} style={{ transform: "rotate(180deg)" }} /></VBtn>
            <VThumb />
            <Spring />
            <VBtn><Caret $c="#777" $s={4} /></VBtn>
          </VTrack>
        </VScroll>
      </MainRow>

      <TabBar>
        <TabNav>
          <Caret $c="#c4c4c4" $s={4} style={{ transform: "rotate(90deg)" }} />
          <Caret $c="#c4c4c4" $s={4} style={{ transform: "rotate(-90deg)" }} />
        </TabNav>
        <SheetTab $active $w={93}>Calculation</SheetTab>
        <SheetTab $w={64}>Tables</SheetTab>
        <TabDiv />
        <SheetTab $w={72}>Options</SheetTab>
        <TabDiv />
        <SheetTab $w={52}>Data</SheetTab>
        <TabDiv />
        <SheetTab $w={87}>Dictionary</SheetTab>
        <TabDiv />
        <Slot $w={82}>
          <svg width="16" height="16" fill="none" stroke="#808080" strokeWidth="1.200">
            <circle cx="8" cy="8" r="7" />
            <path d="M8 4V12M4 8H12" strokeWidth="1.600" />
          </svg>
        </Slot>
        <GripSlot $w={59}>
          <Grip><i /><i /><i /></Grip>
        </GripSlot>
        <HScroll>
          <HBtn><Caret $c="#555" $s={4} style={{ transform: "rotate(90deg)" }} /></HBtn>
          <HThumb />
          <Spring />
          <HBtn><Caret $c="#555" $s={4} style={{ transform: "rotate(-90deg)" }} /></HBtn>
        </HScroll>
      </TabBar>

      <StatusBar>
        <Ready>Ready</Ready>
        <ViewBtn $on>
          <svg width="13" height="13" fill="none" stroke="#707070">
            <path d="M.5 .5H12.500V12.500H.5ZM4.500 .5V12.500M8.500 .5V12.500M.5 4.500H12.500M.5 8.500H12.500" />
          </svg>
        </ViewBtn>
        <ViewBtn>
          <svg width="14" height="13" fill="none" stroke="#707070">
            <path d="M.5 .5H13.500V12.500H.5ZM3.500 3.500H10.500V9.500H3.500ZM5 5.500H9M5 7.500H9" />
          </svg>
        </ViewBtn>
        <ViewBtn>
          <svg width="14" height="13" fill="none" stroke="#707070">
            <path d="M.5 .5H13.500V12.500H.5ZM.5 8.500H13.500M7 .5V8.500" />
          </svg>
        </ViewBtn>
        <ZoomWrap>
          <svg width="6" height="3"><rect y="1" width="6" height="2" fill="#666" /></svg>
          <Slider><SliderThumb /></Slider>
          <svg width="9" height="9" fill="#666"><path d="M3.500 0H5.500V3.500H9V5.500H5.500V9H3.500V5.500H0V3.500H3.500Z" /></svg>
          <ZoomPct>100%</ZoomPct>
        </ZoomWrap>
      </StatusBar>
    </App_>
  );
}
